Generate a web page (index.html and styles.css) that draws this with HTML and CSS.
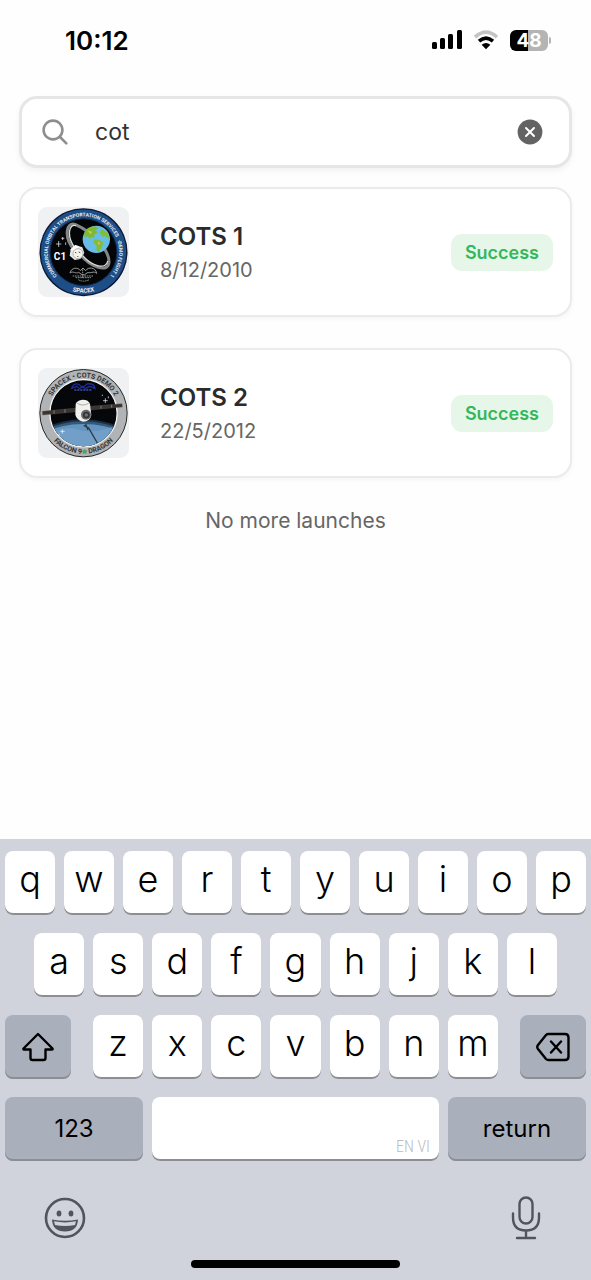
FILE: index.html
```html
<!DOCTYPE html>
<html lang="en">
<head>
<meta charset="utf-8">
<meta name="viewport" content="width=device-width, initial-scale=1">
<title>Launches</title>
<link rel="stylesheet" href="styles.css">
</head>
<body>
<header class="status">
  <time class="clock">10:12</time>
  <div class="indicators">
    <svg class="signal" viewBox="0 0 30 20" aria-hidden="true">
      <rect x="0" y="12" width="5" height="7" rx="1.5"/><rect x="8" y="8" width="5" height="11" rx="1.5"/><rect x="16" y="4" width="5" height="15" rx="1.5"/><rect x="25" y="0" width="5" height="19" rx="1.5"/>
    </svg>
    <svg class="wifi" viewBox="0 0 26 20" aria-hidden="true">
      <path d="M2 7.2Q13-2.8 24 7.2" fill="none" stroke="#c4c4c4" stroke-width="3.6"/>
      <path d="M6 11.2Q13 5 20 11.2" fill="none" stroke="#000" stroke-width="3.6"/>
      <path d="M13 19.2L8.6 14.8Q13 11.4 17.4 14.8Z"/>
    </svg>
    <div class="battery"><span class="level">48</span></div>
  </div>
</header>

<main class="content">
  <form class="search">
    <svg class="search-icon" viewBox="0 0 26 26" fill="none" stroke="#8e8e8e" stroke-width="2.6" stroke-linecap="round" aria-hidden="true"><circle cx="11" cy="11" r="9.4"/><path d="M18 18l6.3 6.3"/></svg>
    <input class="search-input" type="text" value="cot" aria-label="Search launches">
    <button class="clear" type="button" aria-label="Clear search">
      <svg viewBox="0 0 26 26"><circle cx="13" cy="13" r="12.4" fill="#636363"/><path d="M9 9l8 8M17 9l-8 8" stroke="#fff" stroke-width="2" stroke-linecap="round"/></svg>
    </button>
  </form>

  <ul class="launches">
    <li class="card">
      <svg class="patch" viewBox="24 22 273 270" role="img" aria-label="COTS 1 mission patch">
        <defs>
          <path id="c1-top" d="M85 233A107 107 0 1 1 236 233"/>
          <path id="c1-bottom" d="M70 239A122 122 0 0 0 251 239"/>
        </defs>
        <circle cx="160.500" cy="157.500" r="132" fill="#0b1830"/>
        <circle cx="160.500" cy="157.500" r="114" fill="none" stroke="#1d4e87" stroke-width="28"/>
        <circle cx="160.500" cy="157.500" r="100" fill="#030507" stroke="#102a4b" stroke-width="3"/>
        <path d="M133 150C100 115 108 62 137 75C190 99 238 153 237 187C236 222 181 202 151 165" fill="none" stroke="#858786" stroke-width="9"/>
        <path d="M135 145C109 111 116 70 138 78M158 168C187 201 230 211 233 184" fill="none" stroke="#dcdcd8" stroke-width="4"/>
        <circle cx="199" cy="119" r="41" fill="#68bce8"/>
        <path d="M163 101C166 85 184 78 198 81L205 87L195 92L204 98L192 105L194 114L184 111L181 118L173 110L163 112Z" fill="#7fb92f"/>
        <path d="M192 119L207 121L220 128L216 143L205 156L199 151L200 138L191 130ZM215 88L234 101L238 119L225 109L216 111L209 98Z" fill="#83bd31"/>
        <path d="M171 92L186 96L182 104ZM204 125L211 131L205 136Z" fill="#d5c06b"/>
        <path d="M122 149L136 136L157 143L163 160L151 178L134 181L119 168Z" fill="#e8e9e5"/>
        <path d="M122 149L136 136L148 141L128 153Z" fill="#fff"/>
        <circle cx="144" cy="162" r="15" fill="#f5f4ed" stroke="#999" stroke-width="2"/>
        <path d="M135 158l4 2m7-3l5 2m-9 10l3 3" stroke="#454545" stroke-width="3"/>
        <path d="M86 124v18M78 133h16M98 112v9M94 116h9M107 128v8" stroke="#fff" stroke-width="2"/>
        <text x="90" y="180" text-anchor="middle" class="patch-code">C1</text>
        <path d="M120 220C123 204 144 201 151 213L159 205L167 213C174 201 197 202 200 221C190 212 181 223 174 218L164 225L156 225L146 218C137 224 129 212 120 220" fill="none" stroke="#999" stroke-width="3"/>
        <path d="M128 229h63M137 234h46M145 240q14 9 33 0M158 209v28" fill="none" stroke="#8e8e8e" stroke-width="3" stroke-dasharray="5 2"/>
        <text class="patch-ring light long" text-anchor="middle"><textPath href="#c1-top" startOffset="50%">COMMERCIAL ORBITAL TRANSPORTATION SERVICES &nbsp;&nbsp; DEMO FLIGHT 1</textPath></text>
        <path d="M269 120l2 4 5 1-4 3 1 5-4-3-4 3 1-5-4-3 5-1z" fill="#77b7a4"/>
        <text class="patch-ring light" text-anchor="middle"><textPath href="#c1-bottom" startOffset="50%">SPACEX</textPath></text>
      </svg>
      <div class="info"><h2 class="name">COTS 1</h2><p class="date">8/12/2010</p></div>
      <span class="badge">Success</span>
    </li>
    <li class="card">
      <svg class="patch" viewBox="24 22 273 270" role="img" aria-label="COTS 2 mission patch">
        <defs>
          <path id="c2-top" d="M54 157A106 106 0 0 1 267 157"/>
          <path id="c2-bottom" d="M38 157A122 122 0 0 0 283 157"/>
          <clipPath id="c2-disc"><circle cx="160.500" cy="157.500" r="99"/></clipPath>
        </defs>
        <circle cx="160.500" cy="157.500" r="131" fill="#b1b3b4" stroke="#252729" stroke-width="3"/>
        <circle cx="160.500" cy="157.500" r="101" fill="#05070a" stroke="#f2f3f4" stroke-width="4"/>
        <g clip-path="url(#c2-disc)">
          <ellipse cx="160" cy="270" rx="165" ry="94" fill="#172e45"/>
          <ellipse cx="160" cy="274" rx="165" ry="92" fill="#355979"/>
          <ellipse cx="160" cy="281" rx="165" ry="91" fill="#6495c0"/>
          <path d="M65 218q38-24 82-11t100-9v60H65z" fill="#7daad0" opacity=".5"/>
        </g>
        <path d="M125 83Q130 66 146 71L158 81L171 70Q191 66 195 83L179 77L166 84L158 77L149 84L141 77Z" fill="none" stroke="#202b92" stroke-width="4"/>
        <path d="M133 88h52" stroke="#454faf" stroke-width="5" stroke-dasharray="6 3"/>
        <path d="M226 113v14M219 120h14M235 107v6M217 102v4M97 206v13M91 212h13M87 219v7" stroke="#fff" stroke-width="2"/>
        <path d="M37 152L139 142V153L38 163ZM181 137L276 129L277 139L182 148Z" fill="#393432" stroke="#64554e" stroke-width="1"/>
        <path d="M72 149v10M105 146v10M213 135v9M245 132v9" stroke="#a6a19b" stroke-width="2"/>
        <path d="M137 130Q140 119 158 117Q176 117 180 130L184 163Q180 183 159 183Q140 179 136 162Z" fill="#f0f0ed"/>
        <path d="M142 128Q158 138 176 128" fill="none" stroke="#aaa" stroke-width="3"/>
        <circle cx="168" cy="162" r="15" fill="#67696b"/><circle cx="169" cy="163" r="10" fill="#303236"/><circle cx="169" cy="163" r="5" fill="#6f7274"/>
        <path d="M161 194L176 202L202 247M167 190L174 208" fill="none" stroke="#303840" stroke-width="4"/>
        <text class="patch-ring dark" text-anchor="middle"><textPath href="#c2-top" startOffset="50%">SPACEX • COTS DEMO 2</textPath></text>
        <text class="patch-ring dark" text-anchor="middle"><textPath href="#c2-bottom" startOffset="50%">FALCON 9 &nbsp;&nbsp; DRAGON</textPath></text>
        <path d="M164 264l3 5 6 1-4 5 1 6-6-3-6 3 1-6-4-5 6-1z" fill="#46a573"/>
      </svg>
      <div class="info"><h2 class="name">COTS 2</h2><p class="date">22/5/2012</p></div>
      <span class="badge">Success</span>
    </li>
  </ul>
  <p class="end">No more launches</p>
</main>

<section class="keyboard" aria-label="Keyboard">
  <div class="row">
    <button class="key">q</button><button class="key">w</button><button class="key">e</button><button class="key">r</button><button class="key">t</button><button class="key">y</button><button class="key">u</button><button class="key">i</button><button class="key">o</button><button class="key">p</button>
  </div>
  <div class="row middle">
    <button class="key">a</button><button class="key">s</button><button class="key">d</button><button class="key">f</button><button class="key">g</button><button class="key">h</button><button class="key">j</button><button class="key">k</button><button class="key">l</button>
  </div>
  <div class="row third">
    <button class="key special" aria-label="Shift"><svg class="key-icon" viewBox="0 0 34 30"><path d="M17 2L31.500 16.500Q32 17.500 31 17.500H24.500V26Q24.500 28 22.500 28H11.500Q9.500 28 9.500 26V17.500H3Q2 17.500 2.500 16.500Z"/></svg></button>
    <div class="letters"><button class="key">z</button><button class="key">x</button><button class="key">c</button><button class="key">v</button><button class="key">b</button><button class="key">n</button><button class="key">m</button></div>
    <button class="key special" aria-label="Delete"><svg class="key-icon" viewBox="0 0 34 30"><path d="M12.500 2H29Q32.500 2 32.500 5.500V24.500Q32.500 28 29 28H12.500Q11 28 10 27L2 17Q.500 15 2 13L10 3Q11 2 12.500 2ZM15 9.500L25 20.500M25 9.500L15 20.500"/></svg></button>
  </div>
  <div class="row">
    <button class="key special wide">123</button>
    <button class="key space" aria-label="Space, EN VI"><span class="langs">EN VI</span></button>
    <button class="key special wide">return</button>
  </div>
  <div class="tools">
    <button class="tool" aria-label="Emoji"><svg class="tool-icon" viewBox="0 0 42 44"><circle cx="21" cy="22" r="19" fill="none" stroke="#50545c" stroke-width="2.600"/><ellipse cx="15" cy="17.500" rx="2.400" ry="2.900"/><ellipse cx="27" cy="17.500" rx="2.400" ry="2.900"/><path d="M8 23.500Q21 26 34 23.500Q33.500 35.500 21 35.500T8 23.500Z"/><path d="M10 25.300Q21 27.500 32 25.300L31 29Q21 31 11 29Z" fill="#d0d3db"/></svg></button>
    <button class="tool" aria-label="Dictate"><svg class="tool-icon" viewBox="0 0 42 44" ><g fill="none" stroke="#50545c" stroke-width="2.400" stroke-linecap="round"><rect x="14.500" y="1.500" width="13" height="26" rx="6.500"/><path d="M8 17.500V21.500Q8 34.500 21 34.500T34 21.500V17.500M21 34.500V42M12 42H30"/></g></svg></button>
  </div>
  <div class="home"></div>
</section>
</body>
</html>
```
FILE: styles.css
```css
* { box-sizing: border-box; }

body {
  margin: 0;
  min-height: 100vh;
  display: flex;
  flex-direction: column;
  background: #fefefe;
  color: #2b2b2b;
  font-family: Inter, "Liberation Sans", sans-serif;
}

button {
  margin: 0;
  padding: 0;
  border: 0;
  background: none;
  color: inherit;
  font: inherit;
}

svg { display: block; }
h2, p, ul { margin: 0; padding: 0; }

.status {
  display: flex;
  justify-content: space-between;
  align-items: center;
  height: 80px;
  padding: 0 43px 0 65px;
  color: #000;
}
.clock { font-size: 26px; font-weight: 600; }
.indicators { display: flex; align-items: center; gap: 11px; }
.signal { width: 30px; height: 20px; }
.wifi { width: 26px; height: 20px; }
.battery {
  position: relative;
  width: 38px;
  height: 21px;
  border-radius: 6px;
  background: linear-gradient(90deg, #000 48%, #b4b4b4 48%);
  color: #fff;
  text-align: center;
}
.battery::after {
  content: "";
  position: absolute;
  left: 39px;
  top: 7px;
  width: 2px;
  height: 7px;
  border-radius: 0 2px 2px 0;
  background: #b4b4b4;
}
.level { display: block; font-size: 19px; line-height: 21px; font-weight: 700; }

.content { flex: 1; padding: 16px 19px; }

.search {
  display: flex;
  align-items: center;
  height: 72px;
  padding: 0 26px 0 20px;
  border: 3px solid #e6e6e6;
  border-radius: 18px;
  background: #fff;
  box-shadow: 0 3px 6px rgba(0, 0, 0, .05);
}
.search-icon { width: 26px; height: 26px; }
.search-input {
  flex: 1;
  min-width: 0;
  margin: 0 20px 0 27px;
  padding: 0;
  border: 0;
  outline: 0;
  background: none;
  color: #333;
  font: 400 23px/32px Inter, "Liberation Sans", sans-serif;
}
.clear svg { width: 26px; height: 26px; }

.launches {
  display: grid;
  gap: 31px;
  margin-top: 19px;
  list-style: none;
}
.card {
  display: flex;
  align-items: center;
  height: 130px;
  padding: 0 17px;
  border: 2px solid #ebebeb;
  border-radius: 18px;
  background: #fff;
  box-shadow: 0 2px 5px rgba(0, 0, 0, .04);
}
.patch {
  flex: none;
  width: 91px;
  height: 90px;
  border-radius: 9px;
  background: #f0f1f3;
}
.patch-code { fill: #fff; font: 700 30px Roboto, sans-serif; }
.patch-ring { font-family: Roboto, sans-serif; font-weight: 700; }
.light { fill: #e9f0f5; font-size: 18px; }
.long { font-size: 15px; }
.dark { fill: #333537; font-size: 21px; }

.info { flex: 1; padding: 2px 0 0 31px; }
.name { font-size: 24px; line-height: 34px; font-weight: 600; }
.date { color: #666; font-size: 20px; line-height: 32px; }
.badge {
  padding: 0 14px;
  border-radius: 11px;
  background: #e6f7e9;
  color: #35b75b;
  font-size: 18px;
  line-height: 37px;
  font-weight: 600;
}
.end {
  margin-top: 28px;
  color: #666;
  font-size: 21px;
  line-height: 30px;
  text-align: center;
}

.keyboard {
  display: flex;
  flex-direction: column;
  gap: 18px;
  padding: 12px 5px 12px;
  background: #d0d3db;
  color: #000;
}
.row, .letters { display: flex; gap: 9px; }
.middle { padding: 0 5%; }
.third { gap: 22px; }
.letters { flex: 405 1 0; }
.key {
  flex: 1 1 0;
  min-width: 0;
  height: 64px;
  padding-bottom: 8px;
  border-radius: 8px;
  background: #fff;
  box-shadow: inset 0 -2px 0 #8c8e94;
  font-size: 36px;
  line-height: 44px;
  font-weight: 350;
}
.special {
  display: flex;
  align-items: center;
  justify-content: center;
  padding: 0;
  background: #a9afbb;
  font-size: 24px;
  font-weight: 400;
}
.third > .special { flex: 66 1 0; }
.wide { flex: 138 1 0; }
.space {
  display: flex;
  flex: 287 1 0;
  align-items: flex-end;
  justify-content: flex-end;
  padding: 0;
}
.langs { margin: 0 9px 4px; color: #bcbcbe; font: 300 16px/20px "Roboto Condensed", "Open Sans Condensed", Roboto, sans-serif; }
.key-icon {
  width: 34px;
  height: 30px;
  fill: none;
  stroke: #000;
  stroke-width: 2.4;
  stroke-linejoin: round;
  stroke-linecap: round;
}
.tools {
  display: flex;
  justify-content: space-between;
  padding: 17px 39px 2px;
}
.tool-icon { width: 42px; height: 44px; fill: #50545c; }
.home {
  align-self: center;
  width: 36%;
  height: 8px;
  border-radius: 4px;
  background: #000;
}
```
